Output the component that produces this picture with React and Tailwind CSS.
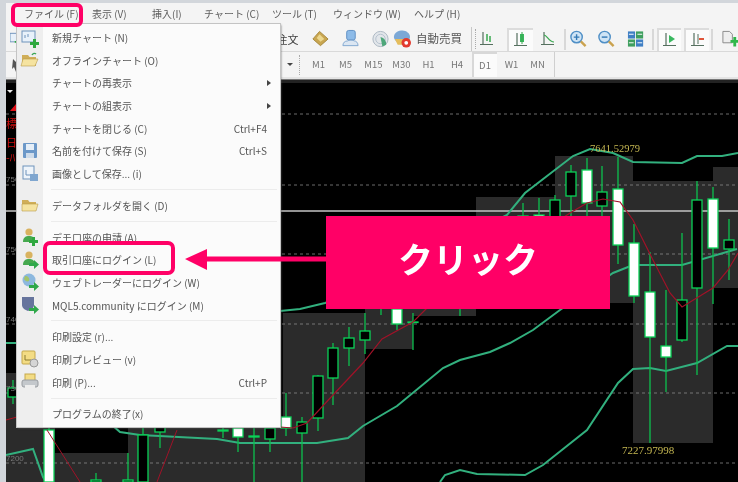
import React from 'react'

const FONT = '[font-family:"Noto_Sans_CJK_JP","Noto_Sans",sans-serif]'

// top menu labels, widths run from one label's left edge to the next
const topMenu = [
  { label: 'ファイル (F)', w: 'w-[68px]' },
  { label: '表示 (V)', w: 'w-[60px]' },
  { label: '挿入(I)', w: 'w-[52px]' },
  { label: 'チャート (C)', w: 'w-[68px]' },
  { label: 'ツール (T)', w: 'w-[61px]' },
  { label: 'ウィンドウ (W)', w: 'w-[81px]' },
  { label: 'ヘルプ (H)', w: 'w-[60px]' },
]

const periods = [
  { label: 'M1', w: 'w-[28px]' },
  { label: 'M5', w: 'w-[26px]' },
  { label: 'M15', w: 'w-[30px]' },
  { label: 'M30', w: 'w-[26px]' },
  { label: 'H1', w: 'w-[28px]' },
  { label: 'H4', w: 'w-[29px]' },
  { label: 'D1', w: 'w-[25px]', active: true },
  { label: 'W1', w: 'w-[30px]' },
  { label: 'MN', w: 'w-[22px]' },
]

function Gutter({ children }) {
  return (
    <svg width="20" height="20" viewBox="0 0 20 20" className="block">
      {children}
    </svg>
  )
}

function GreenPlus({ x = 11, y = 11 }) {
  return <path d={`M${x + 2} ${y}h3v3h3v3h-3v3h-3v-3h-3v-3h3z`} fill="#2fa83f" />
}

function GreenArrow() {
  return <path d="M9 13h5v-3l5 4.500-5 4.500v-3H9z" fill="#2fa84a" />
}

function Person() {
  return (
    <g>
      <circle cx="9" cy="5" r="3.600" fill="#d9b25f" />
      <path d="M3 15c0-5 3-6 6-6s6 1 6 6z" fill="#46a84e" />
    </g>
  )
}

function Folder({ open }) {
  return (
    <g>
      <path d="M2 5h6l1.500 2H16v9H2z" fill="#d0ae58" />
      <path d={open ? 'M3 9h15l-3 7H1z' : 'M2 9h16l-2 7H2z'} fill="#f5e3a0" stroke="#b99a48" strokeWidth="0.600" />
    </g>
  )
}

const icons = {
  newChart: (
    <Gutter>
      <rect x="2" y="3" width="13" height="11" fill="#e8f1fa" stroke="#6f93bb" />
      <path d="M5 7v3M8 6v3" stroke="#6f93bb" />
      <GreenPlus />
    </Gutter>
  ),
  offline: (
    <Gutter>
      <Folder open />
      <path d="M12 5c1-2 3-2 4-1" stroke="#3aa655" strokeWidth="1.400" fill="none" />
    </Gutter>
  ),
  save: (
    <Gutter>
      <rect x="3" y="2" width="14" height="15" rx="1" fill="#6c98c8" />
      <rect x="6" y="3" width="8" height="6" fill="#e5eef7" />
      <rect x="6" y="12" width="8" height="5" fill="#cfdcea" />
    </Gutter>
  ),
  saveImage: (
    <Gutter>
      <rect x="3" y="2" width="11" height="13" fill="#eef4fa" stroke="#6f93bb" />
      <path d="M6 6v5h5" stroke="#6f93bb" fill="none" />
      <rect x="10" y="10" width="8" height="7" fill="#7fa6cf" />
    </Gutter>
  ),
  folder: (
    <Gutter>
      <Folder />
    </Gutter>
  ),
  demo: (
    <Gutter>
      <Person />
      <GreenPlus x={10} y={10} />
    </Gutter>
  ),
  login: (
    <Gutter>
      <Person />
      <GreenArrow />
    </Gutter>
  ),
  web: (
    <Gutter>
      <circle cx="9" cy="8" r="6.500" fill="#8db8de" />
      <path d="M5 4c3 0 5 2 4 5-2 1-4 0-5-2z" fill="#a4c46a" />
      <GreenArrow />
    </Gutter>
  ),
  mql: (
    <Gutter>
      <path d="M2 2h12v8c0 3-3 5-6 6-3-1-6-3-6-6z" fill="#66749c" />
      <GreenArrow />
    </Gutter>
  ),
  preview: (
    <Gutter>
      <rect x="2" y="2" width="13" height="13" rx="1" fill="#f3dc84" stroke="#c5a84a" />
      <path d="M5 6v5h6" stroke="#8a7a30" fill="none" />
      <circle cx="14" cy="14" r="4" fill="#d5d5d5" stroke="#999" />
    </Gutter>
  ),
  print: (
    <Gutter>
      <rect x="5" y="2" width="10" height="7" fill="#f3dc84" stroke="#c5a84a" />
      <rect x="2" y="8" width="16" height="7" rx="2" fill="#c4c8cc" stroke="#989ca0" />
      <rect x="5" y="13" width="10" height="3" fill="#eee" />
    </Gutter>
  ),
}

const menuGroups = [
  [
    { label: '新規チャート (N)', icon: 'newChart' },
    { label: 'オフラインチャート (O)', icon: 'offline' },
    { label: 'チャートの再表示', arrow: true },
    { label: 'チャートの組表示', arrow: true },
    { label: 'チャートを閉じる (C)', key: 'Ctrl+F4' },
    { label: '名前を付けて保存 (S)', key: 'Ctrl+S', icon: 'save' },
    { label: '画像として保存... (i)', icon: 'saveImage' },
  ],
  [{ label: 'データフォルダを開く (D)', icon: 'folder' }],
  [
    { label: 'デモ口座の申請 (A)', icon: 'demo' },
    { label: '取引口座にログイン (L)', icon: 'login' },
    { label: 'ウェブトレーダーにログイン (W)', icon: 'web' },
    { label: 'MQL5.community にログイン (M)', icon: 'mql' },
  ],
  [
    { label: '印刷設定 (r)...' },
    { label: '印刷プレビュー (v)', icon: 'preview' },
    { label: '印刷 (P)...', key: 'Ctrl+P', icon: 'print' },
  ],
  [{ label: 'プログラムの終了(x)' }],
]

function MenuRow({ item }) {
  return (
    <div className="flex h-[22.7px] items-center">
      <div className="flex h-full w-[26px] items-center justify-center">{item.icon && icons[item.icon]}</div>
      <span className="ml-[9px] whitespace-nowrap text-[10px] text-[#555]">{item.label}</span>
      {item.key && <span className="ml-auto pr-[13px] text-[10px] text-[#555]">{item.key}</span>}
      {item.arrow && <span className="ml-auto mr-[9px] h-0 w-0 border-y-[3px] border-l-[4px] border-y-transparent border-l-[#444]" />}
    </div>
  )
}

function FileMenu() {
  return (
    <div className="absolute left-[17px] top-[24px] h-[403px] w-[263px] bg-[linear-gradient(90deg,#eeeeee_26px,#fbfbfb_26px)] pt-[2.200px] shadow-[1px_1px_2px_rgba(90,90,90,0.9)] outline outline-1 outline-[#c4c4c4]">
      {menuGroups.map((group, i) => (
        <div key={i}>
          {i > 0 && (
            <div className="flex h-[9px] items-center pl-[34px] pr-[3px]">
              <div className="h-px w-full bg-[#ececec]" />
            </div>
          )}
          {group.map((item) => (
            <MenuRow key={item.label} item={item} />
          ))}
        </div>
      ))}
    </div>
  )
}

function ToolBtn({ active, children }) {
  return (
    <div className={`flex h-[23px] w-[26px] items-center justify-center ${active ? 'border-l-2 border-t-2 border-[#dcdcdc] bg-[#fbfbfb]' : ''}`}>
      <svg width="18" height="18" viewBox="0 0 18 18">{children}</svg>
    </div>
  )
}

function Axis() {
  return <path d="M5 2v12M2 14.500h13" stroke="#55705f" strokeWidth="1.200" fill="none" />
}

function TopToolbar() {
  return (
    <div className="flex h-[25px] items-center border-b border-[#d9d9d9] pl-[6px]">
      <svg width="12" height="16" viewBox="0 0 12 16" className="-ml-[2px]">
        <rect x="0" y="2" width="8" height="9" fill="#e8f1fa" stroke="#6f93bb" />
        <path d="M5 10h3v-3h2v3h2v2h-2v3H8v-3H5z" fill="#2fa83f" />
      </svg>
      <div className="ml-[255px] w-[24px] whitespace-nowrap text-[11px] text-[#444]">注文</div>
      <svg width="20" height="20" viewBox="0 0 20 20" className="ml-[12px]">
        <path d="M2 10l7-8 9 8-8 7z" fill="#c9a650" stroke="#a6883d" />
        <path d="M6 9l3-4 5 5-4 3z" fill="#ecd78e" />
      </svg>
      <svg width="20" height="20" viewBox="0 0 20 20" className="ml-[11px]">
        <rect x="6" y="1" width="9" height="10" rx="2" fill="#8dbbe8" stroke="#5e8fc3" />
        <path d="M2 17c0-3 2-5 5-5 1-1 6-1 7 0 2 0 4 2 4 5z" fill="#dbe6f2" stroke="#7fa6cf" />
      </svg>
      <svg width="20" height="20" viewBox="0 0 20 20" className="ml-[11px]">
        <circle cx="10" cy="10" r="8" fill="#e2e6ea" stroke="#aab6c2" />
        <circle cx="10" cy="10" r="5" fill="none" stroke="#b4c0cc" />
        <path d="M10 8a8 8 0 0 1 6 8l-4 2z" fill="#4ea77a" />
      </svg>
      <svg width="22" height="22" viewBox="0 0 22 22" className="ml-[2px]">
        <path d="M2 9c0-5 5-7 9-7s8 3 8 7c0 3-3 7-8 7s-9-4-9-7z" fill="#7ca8d6" />
        <path d="M3 11h16l-2 6H6z" fill="#e5bd5c" />
        <circle cx="15" cy="15" r="5" fill="#e23a2e" />
        <circle cx="15" cy="15" r="2" fill="#fff" />
      </svg>
      <span className="ml-[3px] whitespace-nowrap text-[11.500px] text-[#555]">自動売買</span>
      <div className="ml-[9px] h-[24px] w-px bg-[#c8c8c8]" />
      <div className="ml-[3px] h-[20px] w-[2px] border-l border-dotted border-[#aaa]" />
      <div className="-ml-[3px] flex items-center">
        <ToolBtn>
          <Axis />
          <path d="M9 4v7M12 6v6" stroke="#39a84f" strokeWidth="1.500" />
        </ToolBtn>
        <div className="w-[7px]" />
        <ToolBtn active>
          <Axis />
          <rect x="8" y="3" width="4" height="8" fill="#39b85f" />
          <path d="M10 1v12" stroke="#39a84f" />
        </ToolBtn>
        <div className="w-[2px]" />
        <ToolBtn>
          <Axis />
          <path d="M5 5c3 0 5 7 10 7" stroke="#39a84f" strokeWidth="1.200" fill="none" />
        </ToolBtn>
      </div>
      <div className="ml-[3px] mr-[3px] h-[21px] w-[2px] bg-[#d8d8d8]" />
      <svg width="20" height="20" viewBox="0 0 20 20">
        <circle cx="8" cy="8" r="6" fill="#cfe4f5" stroke="#4f8fc6" strokeWidth="1.500" />
        <path d="M5 8h6M8 5v6" stroke="#3479b5" strokeWidth="1.500" />
        <path d="M12.500 12.500l5 5" stroke="#caa24e" strokeWidth="2.500" />
      </svg>
      <svg width="20" height="20" viewBox="0 0 20 20" className="ml-[9px]">
        <circle cx="8" cy="8" r="6" fill="#cfe4f5" stroke="#4f8fc6" strokeWidth="1.500" />
        <path d="M5 8h6" stroke="#3479b5" strokeWidth="1.500" />
        <path d="M12.500 12.500l5 5" stroke="#caa24e" strokeWidth="2.500" />
      </svg>
      <svg width="18" height="18" viewBox="0 0 18 18" className="ml-[11px]">
        <rect x="1" y="1" width="7.500" height="7.500" fill="#3f7fc4" />
        <rect x="9.500" y="1" width="7.500" height="7.500" fill="#3f9f5f" />
        <rect x="1" y="9.500" width="7.500" height="7.500" fill="#3f9f5f" />
        <rect x="9.500" y="9.500" width="7.500" height="7.500" fill="#3f7fc4" />
        <path d="M2 4h5M11 4h5M2 13h5M11 13h5" stroke="#fff" />
      </svg>
      <div className="ml-[8px] mr-[3px] h-[21px] w-[2px] bg-[#d8d8d8]" />
      <ToolBtn active>
        <Axis />
        <path d="M8 4l6 4-6 4z" fill="#39b85f" />
      </ToolBtn>
      <div className="w-[3px]" />
      <ToolBtn active>
        <Axis />
        <path d="M9 3v10" stroke="#55705f" />
        <path d="M10 7h5v2h-5z" fill="#e0553a" />
      </ToolBtn>
      <div className="ml-[2px] mr-[8px] h-[21px] w-[2px] bg-[#d8d8d8]" />
      <svg width="18" height="20" viewBox="0 0 18 20">
        <path d="M2 2h7l3 3v9H2z" fill="#eee" stroke="#888" />
        <path d="M10 11h3V8h3v3h2v3h-2v4h-3v-4h-3z" fill="#2fb84a" />
      </svg>
    </div>
  )
}

function PeriodToolbar() {
  return (
    <div className="flex h-[27px] items-center border-b-[2px] border-[#e4e4e4] pl-[6px]">
      <svg width="12" height="14" viewBox="0 0 12 14" className="-ml-[2px]">
        <path d="M3 1l7 7H6l2 5-2 1-2-5-2 2z" fill="#555" />
      </svg>
      <div className="ml-[265px] h-0 w-0 border-x-[3px] border-t-[3px] border-x-transparent border-t-[#444]" />
      <div className="ml-[6px] h-[20px] w-[2px] border-l border-dotted border-[#aaa]" />
      <div className="ml-[3.500px] flex h-[27px] items-center">
        {periods.map((p) => (
          <div
            key={p.label}
            className={`flex h-[25px] items-center justify-center text-[9.500px] text-[#777] ${p.w} ${p.active ? 'border-l-2 border-t-2 border-[#d8d8d8] bg-[#fbfbfb]' : ''}`}
          >
            {p.label}
          </div>
        ))}
      </div>
      <div className="ml-[5px] h-[25px] w-px bg-[#cfcfcf]" />
    </div>
  )
}

// [x, wickTop, wickBottom, bodyTop, bodyBottom, white]
const candles = [
  [13, 380, 404, 388, 397, 0],
  [49, 425, 482, 430, 482, 1],
  [96, 473, 482, 480, 482, 0],
  [128, 453, 482, 480, 482, 0],
  [143, 428, 482, 435, 482, 0],
  [160, 426, 448, 427, 432, 0],
  [223, 428, 438, 430, 431, 0],
  [238, 420, 452, 428, 437, 1],
  [254, 428, 482, 436, 437, 0],
  [270, 420, 452, 428, 439, 0],
  [286, 393, 436, 417, 428, 1],
  [302, 417, 482, 422, 433, 0],
  [318, 375, 431, 376, 418, 0],
  [333, 343, 405, 348, 378, 0],
  [349, 327, 366, 338, 348, 0],
  [365, 313, 354, 331, 340, 0],
  [381, 300, 315, 302, 304, 0],
  [397, 300, 330, 309, 324, 1],
  [413, 313, 350, 322, 322.500, 0],
  [460, 300, 316, 304, 306, 0],
  [523, 203, 240, 216, 217, 0],
  [539, 198, 240, 215, 219, 1],
  [555, 195, 240, 200, 230, 0],
  [571, 165, 225, 172, 196, 0],
  [587, 158, 240, 170, 203, 1],
  [602, 166, 217, 192, 206, 0],
  [618, 157, 264, 189, 245, 1],
  [634, 224, 303, 243, 296, 1],
  [650, 252, 443, 292, 337, 1],
  [666, 290, 392, 346, 357, 1],
  [682, 233, 342, 300, 340, 0],
  [697, 181, 375, 200, 288, 0],
  [713, 187, 304, 199, 248, 1],
  [729, 219, 280, 240, 249, 0],
]

const upperBand = '280,311 300,309 325,303 345,296 507,215 525,193 573,156 590,149 613,153 633,162 682,163 697,156 722,156 738,153'
const midBand = '6,343 18,343 120,432 140,435 217,439 240,443 283,443 317,443 348,438 363,426 397,406 443,368 460,360 490,352 510,343 533,330 560,310 613,273 633,265 682,265 737,249'
const lowBand = '440,482 445,475 460,470 477,474 525,475 543,465 587,430 618,383 633,369 650,368 666,371 697,363 727,346 738,346'
const lowBandLeft = '6,455 33,449 43,477 46,482'
const redLine = '280,427 293,428 307,423 333,395 363,363 382,339 413,322 427,308 570,213 587,203 603,199 620,202 633,220 653,260 670,293 682,307 713,288 728,270 738,253'

function Chart() {
  const gridLines = [114, 185, 254, 324, 393, 463]
  return (
    <svg viewBox="6 83 732 399" width="732" height="399" className="block bg-black">
      {/* grey sessions behind the candles */}
      <g fill="#2b2b2b">
        <rect x="6" y="373" width="49" height="109" />
        <rect x="55" y="453" width="73" height="29" />
        <rect x="128" y="427" width="155" height="55" />
        <rect x="283" y="313" width="82" height="169" />
        <rect x="365" y="216" width="48" height="133" />
        <rect x="413" y="216" width="63" height="100" />
        <rect x="476" y="197" width="79" height="100" />
        <rect x="555" y="156" width="78" height="147" />
        <rect x="633" y="181" width="80" height="262" />
        <rect x="713" y="167" width="25" height="121" />
      </g>
      {gridLines.map((y) => (
        <line key={y} x1="6" x2="738" y1={y} y2={y} stroke="#8f8f8f" strokeWidth="1" strokeDasharray="3 3" opacity="0.75" />
      ))}
      <line x1="6" x2="738" y1="211" y2="211" stroke="#c4c4c4" strokeWidth="1.400" />
      <polyline points={upperBand} fill="none" stroke="#32b07e" strokeWidth="2" />
      <polyline points={midBand} fill="none" stroke="#32b07e" strokeWidth="2" />
      <polyline points={lowBand} fill="none" stroke="#32b07e" strokeWidth="2" />
      <polyline points={lowBandLeft} fill="none" stroke="#32b07e" strokeWidth="2" />
      {candles.map(([x, wt, wb, bt, bb, white]) => (
        <g key={x}>
          <line x1={x} x2={x} y1={wt} y2={wb} stroke="#0cc04e" strokeWidth="1.300" />
          <rect
            x={x - 5}
            y={bt}
            width="10"
            height={bb - bt}
            fill={white ? '#ffffff' : '#000000'}
            stroke="#0ad257"
            strokeWidth="1.300"
          />
        </g>
      ))}
      <polyline points={redLine} fill="none" stroke="#a01228" strokeWidth="1.200" />
      <polyline points="6,420 17,417" fill="none" stroke="#b01020" strokeWidth="1" />
      <polyline points="47,430 80,482" fill="none" stroke="#a01228" strokeWidth="1" />
      <polyline points="177,430 157,482" fill="none" stroke="#a01228" strokeWidth="1" />
      <path d="M7 90h6l-3 3z" fill="#eeeeee" />
      <path d="M10 111l6-7v7z" fill="#e01018" />
      <text x="590" y="152" fontSize="10.500" fill="#c6b852" fontFamily="Liberation Serif, serif">7641.52979</text>
      <text x="622" y="454" fontSize="11" fill="#c6b852" fontFamily="Liberation Serif, serif">7227.97998</text>
      <text x="6" y="128" fontSize="11" fill="#d01010" fontFamily="Noto Sans CJK JP, sans-serif">標</text>
      <text x="6" y="147" fontSize="11" fill="#d01010" fontFamily="Noto Sans CJK JP, sans-serif">日</text>
      <text x="6" y="162" fontSize="11" fill="#d01010" fontFamily="Noto Sans CJK JP, sans-serif">-ﾊ</text>
      <text x="6" y="182" fontSize="8" fill="#777" fontFamily="Liberation Sans, sans-serif">750</text>
      <text x="6" y="252" fontSize="8" fill="#777" fontFamily="Liberation Sans, sans-serif">750</text>
      <text x="6" y="322" fontSize="8" fill="#777" fontFamily="Liberation Sans, sans-serif">740</text>
      <text x="6" y="391" fontSize="8" fill="#777" fontFamily="Liberation Sans, sans-serif">730</text>
      <text x="6" y="461" fontSize="8" fill="#777" fontFamily="Liberation Sans, sans-serif">7200</text>
    </svg>
  )
}

function Arrow() {
  return (
    <svg width="142" height="24" viewBox="0 0 142 24" className="absolute left-[185px] top-[248px]">
      <path d="M0 11L22 1v7.500h120v5H22V22z" fill="#ff0066" />
    </svg>
  )
}

export default function App() {
  return (
    <div className={`relative flex h-[482px] w-[738px] flex-col overflow-hidden bg-[#d2d6db] pl-[6px] pt-[3px] blur-[0.45px] ${FONT}`}>
      <div className="flex h-[21px] shrink-0 items-center bg-[#f4f4f4] pl-[18px] text-[10px] text-[#5c5c5c]">
        {topMenu.map((m) => (
          <span key={m.label} className={`whitespace-nowrap ${m.w}`}>
            {m.label}
          </span>
        ))}
      </div>
      <div className="shrink-0 bg-[#f4f4f4] pt-[3px]">
        <TopToolbar />
        <PeriodToolbar />
      </div>
      <div className="h-[4px] shrink-0 border-t border-[#777] bg-[#222]" />
      <Chart />
      <FileMenu />
      {/* pink annotations over the screenshot */}
      <div className="absolute left-[11px] top-[3px] h-[24px] w-[72px] rounded-[6px] border-[4px] border-[#ff0066]" />
      <div className="absolute left-[43px] top-[241px] h-[34px] w-[132px] rounded-[7px] border-[4px] border-[#ff0066]" />
      <Arrow />
      <div className="absolute left-[326px] top-[216px] flex h-[93px] w-[284px] items-center justify-center bg-[#ff0066] pb-[10px] text-[35px] font-bold leading-none text-white">
        クリック
      </div>
    </div>
  )
}
